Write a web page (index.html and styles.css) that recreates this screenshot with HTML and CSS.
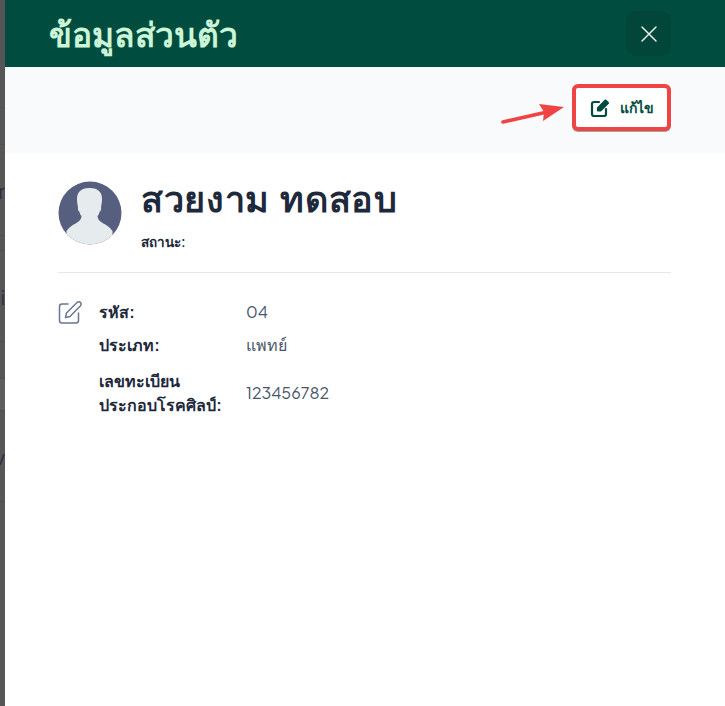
FILE: index.html
```html
<!DOCTYPE html>
<html lang="th">
<head>
    <meta charset="UTF-8">
    <meta name="viewport" content="width=device-width, initial-scale=1.0">
    <title>ข้อมูลส่วนตัว</title>
    <link rel="stylesheet" href="styles.css">
</head>
<body>
    <!-- Page behind the drawer, dimmed -->
    <div class="backdrop">
        <div class="backdrop_row backdrop_top"></div>
        <div class="backdrop_row backdrop_thin"></div>
        <div class="backdrop_row backdrop_tall"><span class="backdrop_text">r</span></div>
        <div class="backdrop_row backdrop_gap"></div>
        <div class="backdrop_row backdrop_tall"><span class="backdrop_text">i</span></div>
        <div class="backdrop_row backdrop_thin"></div>
        <div class="backdrop_row backdrop_band"></div>
        <div class="backdrop_row backdrop_tall"><span class="backdrop_text">v</span></div>
    </div>

    <div class="drawer">
        <div class="drawer_header">
            <h1 class="drawer_title">ข้อมูลส่วนตัว</h1>
            <button class="drawer_close" aria-label="close">
                <svg width="18" height="18" viewBox="0 0 18 18" fill="none" stroke="#e6efec" stroke-width="1.5" stroke-linecap="round">
                    <path d="M2 2l14 14M16 2L2 16"/>
                </svg>
            </button>
        </div>

        <div class="drawer_toolbar">
            <button class="edit_button">
                <svg width="20" height="20" viewBox="0 0 20 20" fill="none" stroke="#004d40" stroke-width="2.2" stroke-linecap="round" stroke-linejoin="round">
                    <path d="M9 4H4a2 2 0 0 0-2 2v10a2 2 0 0 0 2 2h10a2 2 0 0 0 2-2v-5"/>
                    <path d="M8 12.5V10l7.5-7.5 2.5 2.5-7.5 7.5z" fill="#004d40"/>
                </svg>
                <span>แก้ไข</span>
            </button>
            <!-- Annotation arrow, sits on top of the toolbar -->
            <svg class="note_arrow" width="66" height="28" viewBox="0 0 66 28">
                <path d="M2 22L44 12.5" stroke="#ef4444" stroke-width="3.5" stroke-linecap="round"/>
                <path d="M63 7L38 4l5 8-1 9z" fill="#ef4444"/>
            </svg>
        </div>

        <div class="drawer_body">
            <div class="profile">
                <svg class="profile_avatar" width="64" height="64" viewBox="0 0 64 64">
                    <defs><clipPath id="avatar_clip"><circle cx="32" cy="32" r="31.5"/></clipPath></defs>
                    <circle cx="32" cy="32" r="31.5" fill="#565f80"/>
                    <path clip-path="url(#avatar_clip)" fill="#e6ebed" d="M31 7c-8 0-12 4-12 11 0 3 .5 6 1 8-.5 1 0 4 1.5 5 .5 2 1 3 2 4 0 3-2 5-5 7-4 2-7 4-10 8v14h46V50c-3-4-6-6-10-8-3-2-5-4-5-7 1-1 1.5-2 2-4 1.5-1 2-4 1.5-5 .5-2 1-5 1-8 0-7-4-11-12-11z"/>
                </svg>
                <div class="profile_info">
                    <h2 class="profile_name">สวยงาม ทดสอบ</h2>
                    <div class="profile_status">สถานะ:</div>
                </div>
            </div>

            <div class="details">
                <svg class="details_icon" width="24" height="24" viewBox="0 0 24 24" fill="none" stroke="#6b7690" stroke-width="1.5" stroke-linecap="round" stroke-linejoin="round">
                    <path d="M10 4H4a2.5 2.5 0 0 0-2.5 2.5v14A2.5 2.5 0 0 0 4 23h14a2.5 2.5 0 0 0 2.5-2.5V13"/>
                    <path d="M19 2.5a2.3 2.3 0 0 1 3.5 3.3L12 16.5l-4.5 1 1-4.5z"/>
                </svg>
                <div class="details_grid">
                    <div class="details_label">รหัส:</div>
                    <div class="details_value">04</div>
                    <div class="details_label">ประเภท:</div>
                    <div class="details_value">แพทย์</div>
                    <div class="details_label details_long">เลขทะเบียน<br>ประกอบโรคศิลป์:</div>
                    <div class="details_value details_long">123456782</div>
                </div>
            </div>
        </div>
    </div>
</body>
</html>
```

FILE: styles.css
```css
* {
    margin: 0;
    padding: 0;
    box-sizing: border-box;
}

body {
    display: flex;
    height: 100vh;
    overflow: hidden;
    background: #565656;
    font-family: "Plus Jakarta Sans", Inter, "Noto Sans", sans-serif;
    color: #1e293b;
}

/* Dimmed page on the left */
.backdrop {
    width: 5px;
    flex-shrink: 0;
    overflow: hidden;
}

.backdrop_row {
    display: flex;
    justify-content: flex-end;
    align-items: center;
    border-bottom: 1px solid #4f4f4f;
}

.backdrop_top {
    height: 108px;
}

.backdrop_thin {
    height: 37px;
}

.backdrop_gap {
    height: 15px;
}

.backdrop_tall {
    height: 91px;
}

.backdrop_band {
    height: 32px;
    background: #5e5e60;
}

.backdrop_text {
    font-size: 20px;
    color: #2b3040;
}

/* Drawer */
.drawer {
    flex: 1;
    display: flex;
    flex-direction: column;
    background: #fff;
}

.drawer_header {
    height: 67px;
    display: flex;
    justify-content: space-between;
    align-items: center;
    padding: 0 54px 0 44px;
    background: #004d40;
}

.drawer_title {
    font-size: 33.5px;
    font-weight: 600;
    line-height: 1;
    color: #ccf5d8;
}

.drawer_close {
    width: 45px;
    height: 45px;
    display: flex;
    justify-content: center;
    align-items: center;
    border: none;
    border-radius: 10px;
    background: #024539;
}

/* Toolbar */
.drawer_toolbar {
    position: relative;
    height: 86px;
    display: flex;
    justify-content: flex-end;
    align-items: flex-start;
    padding: 17px 54px 0 0;
    background: #f9fafb;
}

.edit_button {
    width: 99px;
    height: 47px;
    display: flex;
    justify-content: center;
    align-items: center;
    gap: 10px;
    border: 4px solid #ef4444;
    border-radius: 6px;
    background: #fff;
    box-shadow: 0 1px 0 rgba(0, 0, 0, 0.35);
    font-family: inherit;
    font-size: 14px;
    font-weight: 700;
    color: #004d40;
}

.note_arrow {
    position: absolute;
    left: 496px;
    top: 33px;
}

/* Body */
.drawer_body {
    flex: 1;
    padding: 28px 54px 0 53px;
}

.profile {
    display: flex;
    gap: 19px;
    height: 92px;
    border-bottom: 1px solid #e2e8f0;
}

.profile_name {
    font-size: 36px;
    font-weight: 700;
    line-height: 34px;
    letter-spacing: 0.7px;
    word-spacing: 3px;
    color: #1e293b;
}

.profile_status {
    margin-top: 17px;
    font-size: 13.5px;
    font-weight: 600;
    line-height: 20px;
}

.details {
    display: flex;
    gap: 17px;
    padding-top: 27px;
}

.details_icon {
    flex-shrink: 0;
}

.details_grid {
    display: grid;
    grid-template-columns: 147px auto;
    align-items: center;
    row-gap: 8.5px;
}

.details_label {
    font-size: 16px;
    font-weight: 700;
    line-height: 24px;
}

.details_value {
    font-size: 16px;
    line-height: 24px;
    color: #475569;
}

.details_long {
    margin-top: 4px;
}
```
